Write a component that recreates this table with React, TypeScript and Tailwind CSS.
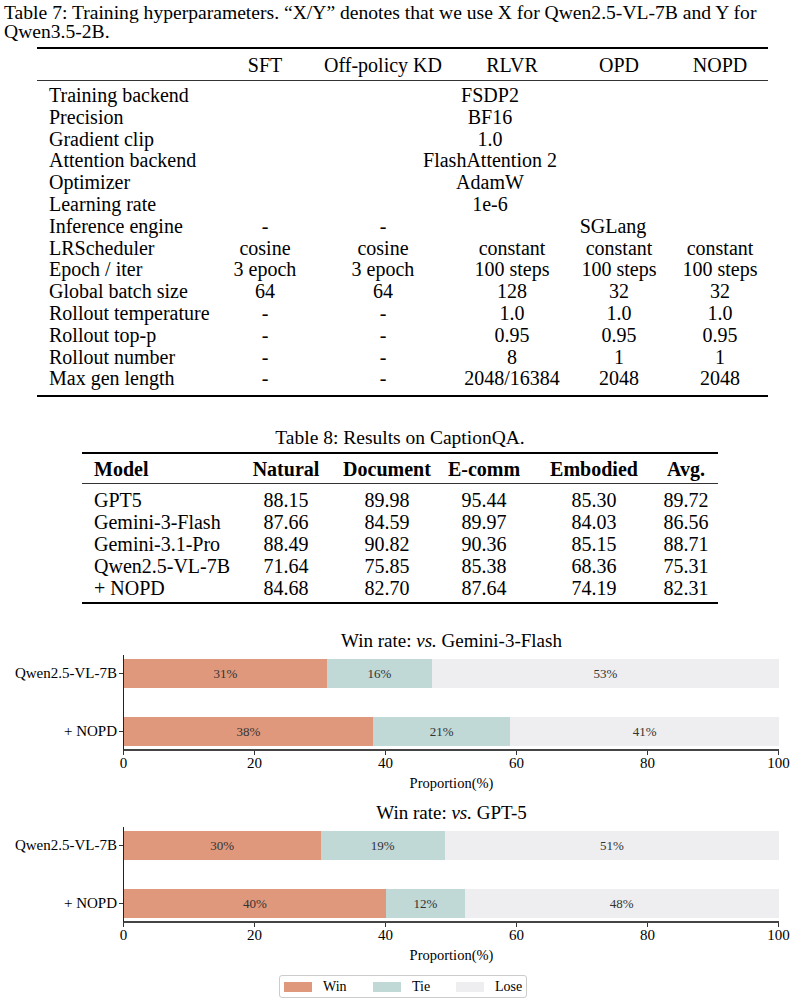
import React from "react";

type Cell = { t: string; span?: number; pr?: boolean };

const t7: { label: string; cells: Cell[] }[] = [
  { label: "Training backend", cells: [{ t: "FSDP2", span: 5, pr: true }] },
  { label: "Precision", cells: [{ t: "BF16", span: 5, pr: true }] },
  { label: "Gradient clip", cells: [{ t: "1.0", span: 5, pr: true }] },
  { label: "Attention backend", cells: [{ t: "FlashAttention 2", span: 5, pr: true }] },
  { label: "Optimizer", cells: [{ t: "AdamW", span: 5, pr: true }] },
  { label: "Learning rate", cells: [{ t: "1e-6", span: 5, pr: true }] },
  { label: "Inference engine", cells: [{ t: "-" }, { t: "-" }, { t: "SGLang", span: 3 }] },
  { label: "LRScheduler", cells: ["cosine", "cosine", "constant", "constant", "constant"].map((t) => ({ t })) },
  { label: "Epoch / iter", cells: ["3 epoch", "3 epoch", "100 steps", "100 steps", "100 steps"].map((t) => ({ t })) },
  { label: "Global batch size", cells: ["64", "64", "128", "32", "32"].map((t) => ({ t })) },
  { label: "Rollout temperature", cells: ["-", "-", "1.0", "1.0", "1.0"].map((t) => ({ t })) },
  { label: "Rollout top-p", cells: ["-", "-", "0.95", "0.95", "0.95"].map((t) => ({ t })) },
  { label: "Rollout number", cells: ["-", "-", "8", "1", "1"].map((t) => ({ t })) },
  { label: "Max gen length", cells: ["-", "-", "2048/16384", "2048", "2048"].map((t) => ({ t })) },
];

const t8 = [
  ["GPT5", "88.15", "89.98", "95.44", "85.30", "89.72"],
  ["Gemini-3-Flash", "87.66", "84.59", "89.97", "84.03", "86.56"],
  ["Gemini-3.1-Pro", "88.49", "90.82", "90.36", "85.15", "88.71"],
  ["Qwen2.5-VL-7B", "71.64", "75.85", "85.38", "68.36", "75.31"],
  ["+ NOPD", "84.68", "82.70", "87.64", "74.19", "82.31"],
];

const WIN = "bg-[#e0987c]";
const TIE = "bg-[#c0d8d6]";
const LOSE = "bg-[#eeeef0]";

function Seg({ pct, cls }: { pct: number; cls: string }) {
  return (
    <div
      className={`${cls} h-full flex items-center justify-center text-[13px] text-[#333]`}
      style={{ width: `${pct}%` }}
    >
      {pct}%
    </div>
  );
}

function WinChart({ vs, rows }: { vs: string; rows: { label: string; v: [number, number, number] }[] }) {
  return (
    <div className="flex flex-col">
      <div className="ml-[124px] w-[655px] h-[22px] text-center text-[19px] leading-[22px] whitespace-nowrap">
        Win rate: <i>vs.</i> {vs}
      </div>
      <div className="mt-[3px] flex">
        <div className="w-[123px] flex flex-col pt-[4px] gap-[29px]">
          {rows.map((r) => (
            <div key={r.label} className="h-[29px] flex items-center justify-end">
              <span className="text-[15px] leading-none whitespace-nowrap mr-[2px]">{r.label}</span>
              <div className="w-[4px] h-px bg-[#333]" />
            </div>
          ))}
        </div>
        <div className="w-[656px] border-l border-b-2 border-l-[#222] border-b-[#444] pt-[4px] pb-[3px] flex flex-col gap-[29px]">
          {rows.map((r) => (
            <div key={r.label} className="h-[29px] flex">
              <Seg pct={r.v[0]} cls={WIN} />
              <Seg pct={r.v[1]} cls={TIE} />
              <Seg pct={r.v[2]} cls={LOSE} />
            </div>
          ))}
        </div>
      </div>
      <div className="ml-[123px] w-[656px] h-[4px] flex justify-between">
        {[0, 1, 2, 3, 4, 5].map((i) => (
          <div key={i} className="w-px h-[4px] bg-[#333]" />
        ))}
      </div>
      <div className="ml-[123px] w-[656px] h-[16px] flex justify-between">
        {["0", "20", "40", "60", "80", "100"].map((l) => (
          <div key={l} className="w-px flex justify-center">
            <span className="text-[15px] leading-[16px] whitespace-nowrap">{l}</span>
          </div>
        ))}
      </div>
      <div className="ml-[124px] w-[655px] mt-[4px] h-[16px] text-center text-[14.5px] leading-[16px]">
        Proportion(%)
      </div>
    </div>
  );
}

export default function App() {
  return (
    <div className="w-[806px] h-[1005px] bg-white text-black font-['Liberation_Serif','Times_New_Roman',serif] overflow-hidden">
      <p className="pl-[4px] pt-[3px] text-[19.6px] leading-[19px] whitespace-nowrap">
        Table 7: Training hyperparameters. “X/Y” denotes that we use X for Qwen2.5-VL-7B and Y for
        <br />
        Qwen3.5-2B.
      </p>

      <div className="ml-[37px] mt-[6px] w-[731px] border-t-2 border-b-2 border-black text-[20px]">
        <div className="grid grid-cols-[193px_70px_166px_92px_122px_80px] h-[32px] items-center border-b border-[#333]">
          <div />
          {["SFT", "Off-policy KD", "RLVR", "OPD", "NOPD"].map((h) => (
            <div key={h} className="flex justify-center whitespace-nowrap">{h}</div>
          ))}
        </div>
        <div className="pt-[4px] pb-[5px]">
          {t7.map((r) => (
            <div
              key={r.label}
              className="grid grid-cols-[193px_70px_166px_92px_122px_80px] h-[21.8px] leading-[21.8px]"
            >
              <div className="pl-[12px] whitespace-nowrap">{r.label}</div>
              {r.cells.map((c, i) => (
                <div
                  key={i}
                  className={`flex justify-center whitespace-nowrap ${
                    c.span === 5 ? "col-span-5 pr-[10px]" : c.span === 3 ? "col-span-3" : ""
                  }`}
                >
                  {c.t}
                </div>
              ))}
            </div>
          ))}
        </div>
      </div>

      <div className="ml-[82px] w-[636px] mt-[31px] flex flex-col">
        <div className="text-center text-[19.5px] leading-[20px] h-[20px]">Table 8: Results on CaptionQA.</div>
        <div className="mt-[4px] border-t-2 border-b-2 border-black text-[20px]">
          <div className="grid grid-cols-[158px_92px_110px_84px_136px_48px] h-[30px] items-center border-b border-[#333] font-bold">
            <div className="pl-[12px]">Model</div>
            {["Natural", "Document", "E-comm", "Embodied", "Avg."].map((h) => (
              <div key={h} className="flex justify-center whitespace-nowrap">{h}</div>
            ))}
          </div>
          <div className="pt-[5px] pb-[3px]">
            {t8.map((r) => (
              <div key={r[0]} className="grid grid-cols-[158px_92px_110px_84px_136px_48px] h-[22px] leading-[22px]">
                <div className="pl-[12px] whitespace-nowrap">{r[0]}</div>
                {r.slice(1).map((v, i) => (
                  <div key={i} className="flex justify-center">{v}</div>
                ))}
              </div>
            ))}
          </div>
        </div>
      </div>

      <div className="mt-[26px]">
        <WinChart
          vs="Gemini-3-Flash"
          rows={[
            { label: "Qwen2.5-VL-7B", v: [31, 16, 53] },
            { label: "+ NOPD", v: [38, 21, 41] },
          ]}
        />
      </div>
      <div className="mt-[11px]">
        <WinChart
          vs="GPT-5"
          rows={[
            { label: "Qwen2.5-VL-7B", v: [30, 19, 51] },
            { label: "+ NOPD", v: [40, 12, 48] },
          ]}
        />
      </div>

      <div className="ml-[279px] mt-[12px] w-[248px] h-[23px] border border-[#cccccc] rounded-[3px] flex items-center pl-[4px] text-[14px]">
        <div className="w-[89px] flex items-center">
          <div className={`${WIN} w-[28px] h-[10px]`} />
          <span className="ml-[11px]">Win</span>
        </div>
        <div className="w-[83px] flex items-center">
          <div className={`${TIE} w-[28px] h-[10px]`} />
          <span className="ml-[11px]">Tie</span>
        </div>
        <div className="flex items-center">
          <div className={`${LOSE} w-[28px] h-[10px]`} />
          <span className="ml-[11px]">Lose</span>
        </div>
      </div>
    </div>
  );
}
